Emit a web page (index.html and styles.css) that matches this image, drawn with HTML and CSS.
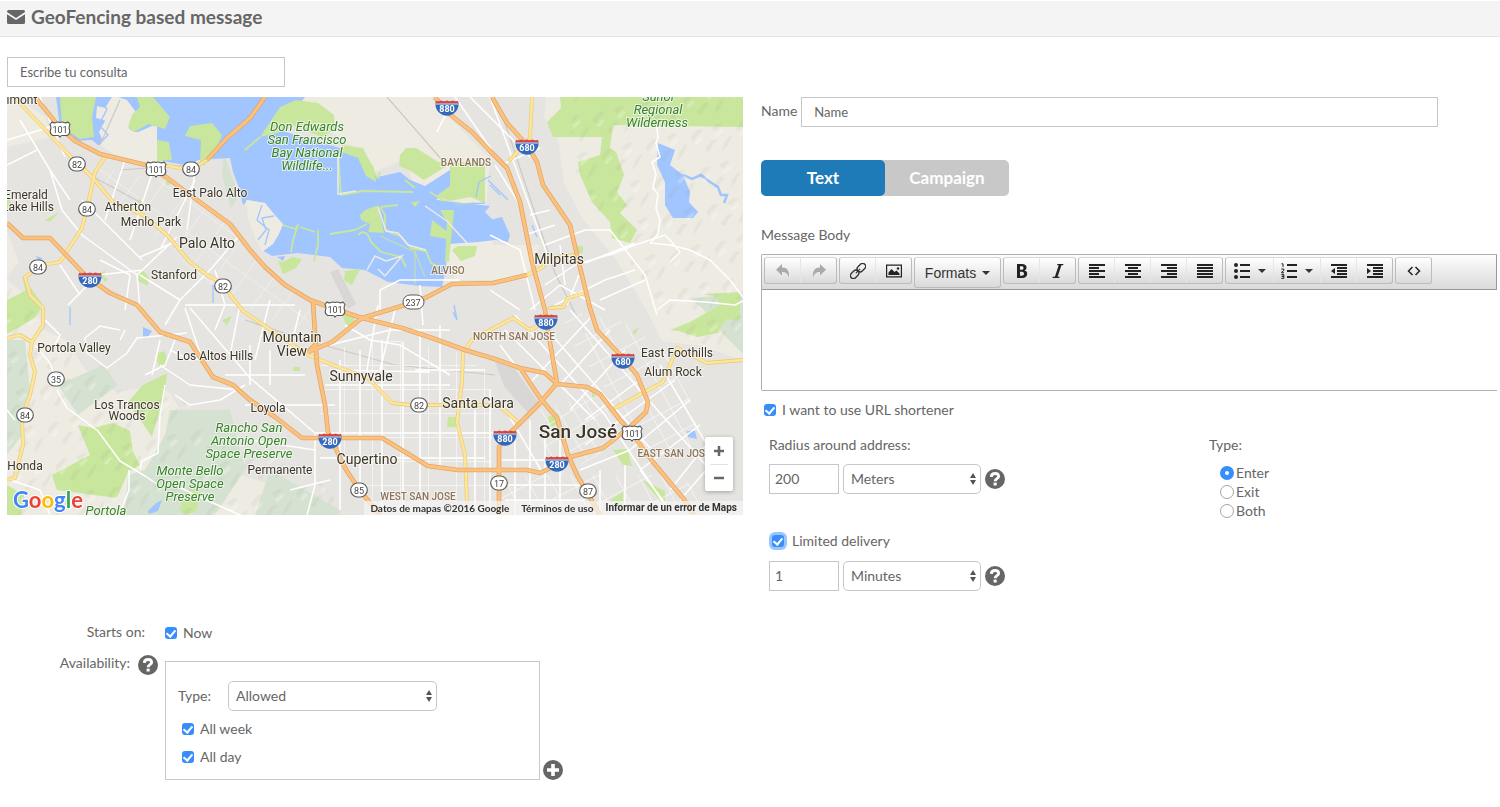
FILE: index.html
```html
<!DOCTYPE html>
<html lang="en">
<head>
<meta charset="utf-8">
<title>GeoFencing based message</title>
<link rel="stylesheet" href="styles.css">
</head>
<body>
<svg class="defs" aria-hidden="true">
  <symbol id="help" viewBox="0 0 20 20"><circle cx="10" cy="10" r="10" fill="#666"/><path d="M6.300 7.800C6.500 5.400 8 4.500 10 4.500c2.200 0 3.600 1.200 3.600 2.900 0 2.300-3.400 2.300-3.400 4.800" fill="none" stroke="#fff" stroke-width="2.900"/><rect x="8.600" y="13.600" width="3.100" height="2.900" fill="#fff"/></symbol>
  <symbol id="left" viewBox="0 0 16 16"><path d="M0 1h16v2H0zM0 4h10v2H0zM0 7h16v2H0zM0 10h10v2H0zM0 13h16v2H0z"/></symbol>
  <symbol id="center" viewBox="0 0 16 16"><path d="M0 1h16v2H0zM3 4h10v2H3zM0 7h16v2H0zM3 10h10v2H3zM0 13h16v2H0z"/></symbol>
  <symbol id="right" viewBox="0 0 16 16"><path d="M0 1h16v2H0zM6 4h10v2H6zM0 7h16v2H0zM6 10h10v2H6zM0 13h16v2H0z"/></symbol>
  <symbol id="justify" viewBox="0 0 16 16"><path d="M0 1h16v2H0zM0 4h16v2H0zM0 7h16v2H0zM0 10h16v2H0zM0 13h16v2H0z"/></symbol>
</svg>

<header class="page-head">
  <svg class="mail" viewBox="0 0 18 14"><path fill="#666" d="M1.500 0h15Q18 0 18 1.500v.6L9 8 0 2.100v-.6Q0 0 1.500 0zM0 4.200l9 5.900 9-5.900v8.300q0 1.500-1.500 1.500h-15Q0 14 0 12.500z"/></svg>
  <h1>GeoFencing based message</h1>
</header>

<main class="page">
  <input class="field search" type="text" placeholder="Escribe tu consulta" aria-label="Escribe tu consulta">

  <div class="columns">
    <section class="map" aria-label="Map">
      <svg class="map-art" viewBox="7 97 736 418" preserveAspectRatio="xMidYMid slice">
        <defs>
          <pattern id="hills" width="46" height="38" patternUnits="userSpaceOnUse" patternTransform="rotate(-12)">
            <path d="M3 12l8-6 6 1-7 5-6 5zM25 7l8-3 4 2-9 5zM14 27l9-8 6 1-6 4-5 6zM34 25l8-7 2 1-7 9-6 4z" fill="#8b8b75" opacity=".09"/>
            <path d="M5 19l7-5 3 1-7 6zM27 14l8-4 2 2-8 5z" fill="#fff" opacity=".25"/>
          </pattern>
          <pattern id="blocks" width="14" height="17" patternUnits="userSpaceOnUse" patternTransform="rotate(-31)"><path d="M0 0h14M0 0v17" stroke="#fff" stroke-width="1.400" fill="none"/></pattern>
          <pattern id="grid" width="28" height="24" patternUnits="userSpaceOnUse" patternTransform="translate(8 5)"><path d="M0 0h28M0 0v24" stroke="#fff" stroke-width="1.400" fill="none"/></pattern>
          <pattern id="diag" width="24" height="26" patternUnits="userSpaceOnUse" patternTransform="rotate(36)"><path d="M0 0h24M0 0v26" stroke="#fff" stroke-width="1.400" fill="none"/></pattern>
          <pattern id="east" width="20" height="25" patternUnits="userSpaceOnUse" patternTransform="rotate(-28)"><path d="M0 0h20M0 0v25" stroke="#fff" stroke-width="1.400" fill="none"/></pattern>
          <symbol id="inter" viewBox="0 0 24 16"><path d="M.5 3Q.2 8.500 3.500 12 7 15.600 12 15.700 17 15.600 20.500 12 23.800 8.500 23.500 3z" fill="#3369bd"/><path d="M1 .8Q4 2 6.500.6 9 2 12 .5 15 2 17.500.6 20 2 23 .8l.7 2.700H.3z" fill="#d64540"/><path d="M.6 4h22.800" stroke="#fff" stroke-width=".8"/></symbol>
          <symbol id="us" viewBox="0 0 22 17"><path d="M3 1Q5 2.500 7 1.500 9 .5 11 1.500 13 .5 15 1.500 17 2.500 19 1l2 2.500Q19.500 6 20.500 9q1 4-2.500 5.500H13Q12 14.500 11 16 10 14.500 9 14.500H4Q.5 13 1.500 9 2.500 6 1 3.500z" fill="#fff" stroke="#555" stroke-width="1.100"/></symbol>
          <symbol id="ca" viewBox="0 0 18 16"><rect x=".7" y="1" width="16.600" height="14" rx="7" fill="#fff" stroke="#5c5c5c" stroke-width="1.200"/></symbol>
          <path id="el-camino" d="M17 100L72 158 93 178 113 202 143 215 167 235 190 262 207 275 220 282 243 311 278 335 308 355 338 367 368 378 392 403 410 405H495"/>
          <path id="route-84" d="M105 157L95 172 90 195 82 228 60 262 43 265 25 277 30 295 43 308 43 325 32 342 30 355 35 372 30 395 22 418 23 445 15 478 7 480M7 338L20 335 32 342M153 163L190 170 207 160"/>
          <path id="expressways" d="M532 97L530 138 510 160M490 330L472 340 463 353 462 382 457 422 465 455 467 502M490 330L513 318 530 330 545 322M550 308L563 307 568 298 585 293M527 275L543 267 547 258 575 255M615 408L663 382 677 348 697 358 707 363 743 360M498 405L510 415 518 422"/>
          <path id="us-101" d="M35 97L48 113 60 128 75 141 100 154 146 165 166 177 193 197 230 224 250 250 265 267 285 285 310 300 332 308 362 318 402 328 432 338 465 350 495 359 520 368 545 373 557 384 587 387 600 394 620 420 633 435 653 462 683 498 694 515"/>
          <path id="i-880" d="M435 97L447 112 472 132 490 151 507 168 520 202 532 262 545 310 547 325 557 383 540 403 515 428 505 437 499 447V515"/>
          <path id="i-280" d="M492 97L507 123 527 145 537 162 543 185 570 225 577 255 590 308 597 330 623 358 637 375 648 402 646 412 630 427 603 448 570 457 557 465 540 473 527 470 458 470 428 466 382 438 302 438 275 417 250 400 233 385 213 377 190 342 160 332 137 305 110 293 87 277 50 238 23 238 7 223"/>
          <path id="spurs" d="M313 302L317 365 325 405 328 432 345 468 358 488 380 515M308 352L332 342 362 318 405 305 425 298 452 284 493 283 527 275M520 368L540 398 557 418 568 455 577 475 600 515M207 160L227 138 250 118 265 97M308 352L315 345"/>
        </defs>

        <rect x="7" y="97" width="736" height="418" fill="#e6e4e1"/>

        <!-- open land -->
        <g fill="#eeebe3">
          <path d="M546 97h197v263l-43-14-38-5-15-30-30-50-35-43-18-35-6-45-14-20z"/>
          <path d="M7 280l25 20 12 30 22 10 20 30 30 22 43-6 10 6 25 40 28 28 22 16 45 15 22 22 20 22H7z"/>
          <path d="M290 97h140l60 62-5 60 10 30-20 20-30 0-40-110-35 15-12-24-30-20-38-18z"/>
          <path d="M88 97h42l30 25v45l-42-10-30-20zM7 97h10l28 20 8 20-46 10zM7 232l12 30-12 14z"/>
          <path d="M448 245h92l-15 35h-70z"/>
        </g>
        <path d="M7 340l18 0 5 50-8 45-15 20zM58 385l45-20 15 20-40 30zM145 470l20-35 5-25 60 0 15 60-30 45h-90l3-40zM270 470l70 40v5h-85zM690 298l53-4v60l-20-20-20-25zM224 155l15 40-8 14-9-34z" fill="#d5e2d1"/>

        <!-- parks -->
        <path fill="#c8e69c" d="M560 97h183v30l-130-2-3 23 6 4 8 23-7 17 10 13-7 8 17 17-7 13-18-5-2-16-18-20-12-27-2-13 22-7 2-18h-49l-6-15 14-14zM143 385l24-12-2 19-13 45-24-35zM78 425l15 3 20-5 17 8 3 21 7 13-12 7-11 26-30-4-30-4-5-15 38-20zM7 300l24-12 12 17-8 13-28 16zM22 276l16 25-9 5zM100 275l8 4-3 3zM140 268l9 9-1 9-10-5zM158 353l6-2 4 9-7 9-4-8zM7 485l17 10-3 20H7zM97 276l8-6v6zM137 202l4-4v7zM222 320l10-4-5 9zM294 367h6v4h-7zM165 180l7 3-5 3zM45 220l14-8-9 10zM7 195l5 10-5 6zM187 492l12-5-2 23-10 5-8-5zM448 417h8v10h-9zM613 450l14-1 5 17-9-1zM642 480l23 11v15zM577 246h6v7h-6zM548 417l10-4 3 10-11 4zM670 330l20-8 30-17-3-8-14-3 37-2v28l-14-1-8 14-21 4-18-6zM632 332l7-5-4 8zM592 392l4 3-4 4zM343 316l9-4 4 12-9 4zM610 500l13-8v16z"/>

        <!-- bay -->
        <g fill="#a0c5ff">
          <path d="M118 97H305L288 118 280 130 305 138 340 148 362 152 370 172 378 177 400 172 410 180 425 186 450 170V190L436 200 490 206 485 212 495 222V240L478 242 448 244 446 268 442 287 420 286 388 282 365 270 342 268 330 257 298 253 272 256 262 250 273 242 283 225 265 203 248 200 243 205 238 185 233 172 230 158 198 160 190 166 157 160V125L145 132 128 132 130 125 138 115 127 100z"/>
          <path d="M56 97H112L105 108 97 106 96 118 110 122 108 128 100 126 107 138 98 145 92 140 76 141 60 128zM180 139l22 0 0 19-12 5-17-1-9-4z"/>
          <path d="M658 143l17 7-5 15 13 10 7 17-1 10 9 10-5 6-20 0-8-13 0-23-8-17z"/>
          <path d="M490 220l12-3 8 18-2 7-18-3zM36 256l6 2-2 6zM143 327l9 4-5 7-4-1zM148 511l8-8 6-3-4 11-9 3zM687 431l8 0 2 8-9-2zM277 257l8-1-2 5z"/>
        </g>
        <path d="M683 175l9 4 9-4 9 7 8 5 3 8 6 0-3 8" fill="none" stroke="#a0c5ff" stroke-width="2.500"/>
        <path fill="#eeebe3" d="M108 106l10-5 8 7-4 16 14 9 18-8 3 33-20-1-32-11-6-14 7-13z"/>
        <path fill="#eeebe3" d="M246 200l19 3 8 10 10 11-4 10-6 10-11 8-6-12-8-22z"/>
        <g fill="#c8e69c">
          <path d="M60 97h36l-4 20 2 20-14 2-18-12zM137 97h16l17 20-5 12-16-5-15 8-6-5 4-12 8-8zM157 140l12 2 3 18-15 1zM190 126l22-3 10 12-10 24-12 4 1-23-16-4z"/>
          <path d="M260 137l20-30 16-7 22 3 16 12 1 14-13 8-30-12-14 8zM342 145l20 3 12 20 2 14-10-6-8-18-16-6zM400 155l6-7 10 0 22 14 47 1v40l-15-6-20 4-14-5 14-10 0-22-26 16-15-10-10-4z"/>
          <path d="M360 215l5-5 13-5 6 28-16-1 2-8-9-4zM432 220l16 12-1 7-17-3zM440 210l14 0-5 52-4 0 2-40zM452 250l6-4 19 0-2 10-14 5zM411 202l9-1-5 6zM278 261l5 1 9-5 10 2-6 9-13 6zM345 271l15-2-8 16-8-5z"/>
        </g>
        <g fill="none" stroke="#c8e69c" stroke-width="1.800" stroke-linejoin="round">
          <path d="M338 153l3 42 22-4 50 1M380 207l5 8 0 14 8 5 8 2 10 12 15 3 5 12 10 5M358 235q8-8 13 7l10 10 20 5 5 10M283 225l12 4 3-4-5 15-2 12M318 230v15l-4 16M300 227l15 5M330 234l25-4 12-6M245 150l15-13M362 148l12 25 4 5 2-6M430 192l14 9 15-7M405 180l10 8M380 207l18-2M455 205l20-2"/>
          <path d="M415 247v37M380 236l35 16 10 25" stroke-width="1"/>
        </g>
        <path d="M367 270l8-14 11 5 16-5-17 20-7-7M338 156v38l18-3M378 207l8 24 12 2 10 12 18 5M425 206l22 15 20 22" fill="none" stroke="#eeebe3" stroke-width="1.500"/>
        <g fill="none" stroke="#a0c5ff" stroke-width="1.300"><path d="M97 97l10 12-8 16 9 10-10 10M258 240l8-10-4-12 12-2M262 205l-5 15 12 10-4 15M488 180l20 20M457 320l-3-15M476 197l3-15 12-6M490 185l10 10M213 303v-18M70 325v-18M532 225l5 12M457 320l-4-8M420 197l35 8 30-2"/></g>
        <path d="M7 97h736v418H7z" fill="url(#hills)" clip-path="url(#slopes)"/>
        <clipPath id="slopes"><path d="M575 97h168v260l-60-20-65-90-50-90zM7 270l50 70 60 50 55-5 40 50 90 30 50 50H7z"/></clipPath>

        <!-- airfields and rail -->
        <path d="M330 272l8-3 18 35-8 5zM495 362l18 4 28 40-12 8-25-28z" fill="#d9d7d5"/>
        <path d="M387 97l55 63M505 123l50 150 30 60M90 175l55 30M120 170l85-6M100 145l20-45M245 320l60 20 90 25 100 10" fill="none" stroke="#ccc9c6" stroke-width="1.200"/>

        <!-- street grids -->
        <g opacity=".75">
          <path d="M322 350l70-10 60 10 40 25v140H385l-45-50-20-50z" fill="url(#grid)"/>
          <path d="M540 410l50-15 30 20 0 25-30 20-30 15-20-40z" fill="url(#blocks)"/>
          <path d="M560 310l60 10 60 40 20 80-40 30-40-60-50-70z" fill="url(#east)"/>
          <path d="M500 475h180l40 40H500z" fill="url(#east)"/>
          <path d="M90 165l100 20 120 125-5 30-90-50-80-70z" fill="url(#diag)" opacity=".6"/>
        </g>

        <g fill="none" stroke="#fff" stroke-width="1.500" stroke-linejoin="round">
          <path d="M7 140l50-15M20 120l30 50 20 30M40 97l25 60M7 165l30-15M50 170l12 40 20 25 55 40 40-38M82 200l60 60M105 220l20-60M130 240l25-75M160 250l35-70M195 170l-8 60M100 260l30 15-5 35M60 265l20 30M68 305l30-30 45-5M137 275l3 35M140 275l40 25 30-30 30-35M180 300l-15 25M190 262l-15-20-35 15M215 270l10 35-10 25M185 305l110 0M185 308l20 60M190 308l60 70 65 55M120 330l-20-4-15 12 2 15 20 15 20-15 10-15 50-5M175 340l-10 25-20 10M300 310l-10 40M270 300l-15 60M240 305l-10 50M225 375h80M250 345v40M270 350v35M245 405h90M315 433h180M320 458h165M325 385h125M340 360v150M360 350v140M382 340v170M403 342v170M420 330v180M440 325v140M475 410v100M490 390v120M330 345l60-15 60 0M330 370l100 2M345 325l25 15 30 5 50 30M378 305l-12 70M395 310l-15 60M420 285l3 40M380 310v-20l20-10h60M415 370h70"/>
          <path d="M490 97l20 55 40 110M470 97l60 60M455 97l45 65M447 112l-10 20M495 165l25 40M505 163l35-15M490 235l30 15 15 60M530 215l20-5M525 235l30-10M545 245l40-15 25 0 35 45 12 40M545 285l30-20 40-12M555 305l50-25 30-10M560 245l5 40M530 310l30-25 45 25M490 290l30 20M585 263l50-20M600 300l45-20M610 255l25-10 30-10 5 5 10 12-10 10M650 243l20 2 20 5 20 10 20 20 15 20-10 5-30-3-35-2-13 10M567 305l12-30"/>
          <path d="M500 345l45 60M505 330l90 90M515 315l90 100 60 90M550 333l100 115M570 310l140 160M590 318l-60 65M610 330l-50 55M625 350l-55 60M640 380l-55 40M675 380l-90 65M690 400l-60 50M700 425l-60 45M710 440l-40 50M715 460l-35 40M660 365l50 85M500 460h70M500 485h80M505 500h80M515 435v80M530 420v90M545 435v75M560 440v70M600 470v40M625 465v50M640 470l30 40M580 470l50-20M507 412l35 60"/>
          <path d="M656 120l2 17-2 6 4 14-8 5 4 12-3 14 5 6-2 14 4 12-2 14-8 9M57 390l10 18 31 23 22 30 25 15 12 8M120 340l5-10M45 320l15 15-5 10M35 345l15 18 7 20M160 340l-8 35M165 385l-5 30-2 38-16 8-2 8M175 395l15 10 30-5 25-15M170 350l20 10 25-3M160 365l30 20 50 5M129 470l0 20-10 25M175 485l20 10 45 20M250 440l65 10v35l-8 30M290 490l40-10M7 410l8 10M10 480l30 10 10 25M315 434v50"/>
        </g>

        <!-- arterials -->
        <g fill="none" stroke-linejoin="round" stroke-linecap="round">
          <g stroke="#e5c978" stroke-width="3.800"><use href="#el-camino"/><use href="#route-84"/><use href="#expressways"/></g>
          <g stroke="#fde59a" stroke-width="2.600"><use href="#el-camino"/><use href="#route-84"/><use href="#expressways"/></g>
        </g>

        <!-- freeways: casing below, fill above -->
        <g fill="none" stroke-linejoin="round">
          <g stroke="#e5a563" stroke-width="4.600"><use href="#us-101"/><use href="#i-880"/><use href="#i-280"/><use href="#spurs"/></g>
          <g stroke="#fbc27f" stroke-width="3"><use href="#us-101"/><use href="#i-880"/><use href="#i-280"/><use href="#spurs"/></g>
        </g>

        <!-- route shields -->
        <g class="shield">
          <use href="#us" x="49" y="121" width="22" height="17"/><text x="60" y="133">101</text>
          <use href="#us" x="145" y="161" width="22" height="17"/><text x="156" y="173">101</text>
          <use href="#us" x="324" y="301" width="22" height="17"/><text x="335" y="313">101</text>
          <use href="#us" x="621" y="425" width="22" height="17"/><text x="632" y="437">101</text>
          <use href="#ca" x="68" y="156" width="18" height="16"/><text x="77" y="168">82</text>
          <use href="#ca" x="182" y="161" width="18" height="16"/><text x="191" y="173">84</text>
          <use href="#ca" x="78" y="201" width="18" height="16"/><text x="87" y="213">84</text>
          <use href="#ca" x="29" y="259" width="18" height="16"/><text x="38" y="271">84</text>
          <use href="#ca" x="214" y="278" width="18" height="16"/><text x="223" y="290">82</text>
          <use href="#ca" x="47" y="371" width="18" height="16"/><text x="56" y="383">35</text>
          <use href="#ca" x="16" y="407" width="18" height="16"/><text x="25" y="419">84</text>
          <use href="#ca" x="410" y="397" width="18" height="16"/><text x="419" y="409">82</text>
          <use href="#ca" x="350" y="482" width="18" height="16"/><text x="359" y="494">85</text>
          <use href="#ca" x="490" y="475" width="18" height="16"/><text x="499" y="487">17</text>
          <use href="#ca" x="579" y="483" width="18" height="16"/><text x="588" y="495">87</text>
          <rect x="403" y="295" width="21" height="14" rx="7" fill="#fff" stroke="#5c5c5c"/><text x="413" y="306">237</text>
        </g>
        <g class="shield inter">
          <use href="#inter" x="78" y="272" width="24" height="16"/><text x="90" y="284">280</text>
          <use href="#inter" x="435" y="100" width="24" height="16"/><text x="447" y="112">880</text>
          <use href="#inter" x="515" y="139" width="24" height="16"/><text x="527" y="151">680</text>
          <use href="#inter" x="534" y="314" width="24" height="16"/><text x="546" y="326">880</text>
          <use href="#inter" x="611" y="353" width="24" height="16"/><text x="623" y="365">680</text>
          <use href="#inter" x="318" y="433" width="24" height="16"/><text x="330" y="445">280</text>
          <use href="#inter" x="493" y="430" width="24" height="16"/><text x="505" y="442">880</text>
          <use href="#inter" x="545" y="456" width="24" height="16"/><text x="557" y="468">280</text>
        </g>

        <!-- place names -->
        <g class="place">
          <text x="22" y="104">imont</text>
          <text x="26" y="199">Emerald</text><text x="28" y="211">Lake Hills</text>
          <text x="128" y="211">Atherton</text><text x="151" y="226">Menlo Park</text>
          <text x="210" y="197">East Palo Alto</text><text x="174" y="279">Stanford</text>
          <text x="74" y="352">Portola Valley</text><text x="215" y="360">Los Altos Hills</text>
          <text x="127" y="409">Los Trancos</text><text x="127" y="420">Woods</text>
          <text x="25" y="470">Honda</text><text x="268" y="412">Loyola</text>
          <text x="280" y="474">Permanente</text>
          <text x="677" y="357">East Foothills</text><text x="673" y="376">Alum Rock</text>
        </g>
        <g class="place town">
          <text x="207" y="248">Palo Alto</text><text x="559" y="264">Milpitas</text>
          <text x="292" y="342">Mountain</text><text x="292" y="356">View</text>
          <text x="361" y="381">Sunnyvale</text><text x="478" y="408">Santa Clara</text>
          <text x="367" y="464">Cupertino</text>
        </g>
        <text class="place city" x="578" y="438">San José</text>
        <g class="place district">
          <text x="466" y="166">BAYLANDS</text><text x="448" y="274">ALVISO</text>
          <text x="514" y="340">NORTH SAN JOSE</text><text x="418" y="500">WEST SAN JOSE</text>
          <text x="674" y="457">EAST SAN JOSE</text>
        </g>
        <g class="place park">
          <text x="307" y="131">Don Edwards</text><text x="307" y="144">San Francisco</text><text x="307" y="157">Bay National</text><text x="307" y="170">Wildlife...</text>
          <text x="658" y="101">Sunol</text><text x="658" y="114">Regional</text><text x="657" y="127">Wilderness</text>
          <text x="249" y="432">Rancho San</text><text x="249" y="445">Antonio Open</text><text x="249" y="458">Space Preserve</text>
          <text x="190" y="475">Monte Bello</text><text x="190" y="488">Open Space</text><text x="190" y="501">Preserve</text>
          <text x="106" y="515">Portola</text>
        </g>
        <text class="google" x="13" y="508"><tspan fill="#4285f4">G</tspan><tspan fill="#ea4335">o</tspan><tspan fill="#fbbc05">o</tspan><tspan fill="#4285f4">g</tspan><tspan fill="#34a853">l</tspan><tspan fill="#ea4335">e</tspan></text>
      </svg>
      <div class="zoom">
        <button type="button" aria-label="Zoom in"><svg viewBox="0 0 12 12"><path d="M1 6h10M6 1v10"/></svg></button>
        <button type="button" aria-label="Zoom out"><svg viewBox="0 0 12 12"><path d="M1 6h10"/></svg></button>
      </div>
      <div class="credits">
        <span>Datos de mapas ©2016 Google</span>
        <a href="#terms">Términos de uso</a>
        <a href="#report" class="report">Informar de un error de Maps</a>
      </div>
    </section>

    <form class="message">
      <div class="name-row">
        <label for="name">Name</label>
        <input class="field" id="name" type="text" placeholder="Name">
      </div>

      <div class="tabs">
        <button type="button" class="tab active">Text</button>
        <button type="button" class="tab">Campaign</button>
      </div>

      <label class="body-label" for="body">Message Body</label>
      <div class="editor">
        <div class="toolbar">
          <div class="group faded">
            <button type="button" aria-label="Undo"><svg viewBox="0 0 16 16"><path d="M7 1v3.500c5 0 7.500 3 7 10C12.500 10.500 11 9 7 9v3.500L1 6.700z"/></svg></button>
            <button type="button" aria-label="Redo"><svg viewBox="0 0 16 16"><path d="M9 1v3.500c-5 0-7.500 3-7 10C3.500 10.500 5 9 9 9v3.500l6-5.800z"/></svg></button>
          </div>
          <div class="group">
            <button type="button" aria-label="Link"><svg viewBox="0 0 16 16"><g fill="none" stroke="#333" stroke-width="1.300" transform="rotate(-45 8 8)"><rect x="-1.500" y="5" width="9.500" height="6" rx="3"/><rect x="8" y="5" width="9.500" height="6" rx="3"/><path d="M5 8h6"/></g></svg></button>
            <button type="button" aria-label="Image"><svg viewBox="0 0 16 16"><path d="M0 1.500h16v13H0zM1.200 2.700v10.600h13.600V2.700z" fill-rule="evenodd"/><path d="M2.500 12V9.500L5.500 6l3 3 2-1.500 3 3V12z"/><circle cx="12" cy="5.500" r="1.200"/></svg></button>
          </div>
          <div class="group formats"><button type="button">Formats <i class="caret"></i></button></div>
          <div class="group">
            <button type="button" aria-label="Bold"><svg viewBox="0 0 16 16"><path fill-rule="evenodd" d="M3 1h5c3 0 4.500 1.300 4.500 3.500 0 1.600-.8 2.500-2 3 1.700.4 2.700 1.500 2.700 3.300 0 2.700-1.800 4.200-5 4.200H3zM6 3.200v3.500h1.600c1.300 0 1.900-.6 1.900-1.800s-.6-1.700-1.900-1.700zM6 8.800v4h1.800c1.500 0 2.200-.7 2.200-2s-.7-2-2.200-2z"/></svg></button>
            <button type="button" aria-label="Italic"><svg viewBox="0 0 16 16"><path d="M7.500 1h6l-.4 1.200h-1.700L7.600 13.800h2L9.200 15H2.500l.4-1.200h2L8.700 2.200H7.100z"/></svg></button>
          </div>
          <div class="group">
            <button type="button" aria-label="Align left"><svg><use href="#left"/></svg></button>
            <button type="button" aria-label="Align center"><svg><use href="#center"/></svg></button>
            <button type="button" aria-label="Align right"><svg><use href="#right"/></svg></button>
            <button type="button" aria-label="Justify"><svg><use href="#justify"/></svg></button>
          </div>
          <div class="group">
            <button type="button" class="wide" aria-label="Bullet list"><svg viewBox="0 0 16 16"><path d="M6 1h10v2H6zM6 7h10v2H6zM6 13h10v2H6z"/><circle cx="2" cy="2" r="2"/><circle cx="2" cy="8" r="2"/><circle cx="2" cy="14" r="2"/></svg><i class="caret"></i></button>
            <button type="button" class="wide" aria-label="Numbered list"><svg viewBox="0 0 16 16"><path d="M6 1h10v2H6zM6 7h10v2H6zM6 13h10v2H6z"/><path d="M.5.800H2V4M.3 6h2.500v1.500L.7 9v.8H3M.3 11.600h2.500v1.800H.8h2v2H.3" fill="none" stroke="#222" stroke-width="1"/></svg><i class="caret"></i></button>
            <button type="button" aria-label="Outdent"><svg viewBox="0 0 16 16"><path d="M0 1h16v2H0zM6 4h10v2H6zM6 7h10v2H6zM6 10h10v2H6zM0 13h16v2H0zM4 5v6L0 8z"/></svg></button>
            <button type="button" aria-label="Indent"><svg viewBox="0 0 16 16"><path d="M0 1h16v2H0zM6 4h10v2H6zM6 7h10v2H6zM6 10h10v2H6zM0 13h16v2H0zM0 5v6l4-3z"/></svg></button>
          </div>
          <div class="group"><button type="button" aria-label="Source code"><svg viewBox="0 0 16 16"><path d="M6.500 4L2.500 8l4 4M9.500 4l4 4-4 4" fill="none" stroke="#222" stroke-width="1.500"/></svg></button></div>
        </div>
        <textarea id="body"></textarea>
      </div>

      <label class="check shorten"><input type="checkbox" checked>I want to use URL shortener</label>

      <div class="options">
        <div class="limits">
          <label for="radius">Radius around address:</label>
          <div class="pair">
            <input class="field" id="radius" type="text" value="200">
            <select aria-label="Radius unit"><option>Meters</option></select>
            <svg class="badge"><use href="#help"/></svg>
          </div>
          <label class="check limited"><input class="focus" type="checkbox" checked>Limited delivery</label>
          <div class="pair">
            <input class="field" type="text" value="1" aria-label="Delivery limit">
            <select aria-label="Delivery unit"><option>Minutes</option></select>
            <svg class="badge"><use href="#help"/></svg>
          </div>
        </div>
        <fieldset class="types">
          <legend>Type:</legend>
          <label><input type="radio" name="type" checked>Enter</label>
          <label><input type="radio" name="type">Exit</label>
          <label><input type="radio" name="type">Both</label>
        </fieldset>
      </div>
    </form>
  </div>

  <form class="schedule">
    <span class="caption start">Starts on:</span>
    <label class="check"><input type="checkbox" checked>Now</label>
    <span class="caption">Availability: <svg class="badge"><use href="#help"/></svg></span>
    <div class="availability">
      <div class="rule">
        <div class="rule-type">
          <label for="allow">Type:</label>
          <select id="allow"><option>Allowed</option></select>
        </div>
        <label class="check"><input type="checkbox" checked>All week</label>
        <label class="check"><input type="checkbox" checked>All day</label>
      </div>
      <button type="button" class="add" aria-label="Add"><svg class="badge" viewBox="0 0 20 20"><circle cx="10" cy="10" r="10" fill="#666"/><path d="M10 4v12M4 10h12" stroke="#fff" stroke-width="3.600"/></svg></button>
    </div>
  </form>
</main>
</body>
</html>
```
FILE: styles.css
```css
* { box-sizing: border-box; }
body {
  margin: 0;
  background: #fff;
  color: #666;
  font: 14px/20px Lato, "Open Sans", sans-serif;
}
button, input, select, textarea { font: inherit; color: inherit; margin: 0; }
button { padding: 0; border: 0; background: none; }
.defs { display: none; }

.page-head {
  display: flex;
  align-items: center;
  gap: 6px;
  height: 37px;
  padding: 0 7px 4px;
  background: #f4f4f4;
  border-top: 1px solid #fff;
  border-bottom: 1px solid #e4e4e4;
}
.mail { width: 18px; height: 14px; }
h1 { margin: 0; font-size: 19px; line-height: 24px; font-weight: 700; }

.page { padding: 20px 3px 20px 7px; }
.field {
  height: 30px;
  padding: 0 12px;
  border: 1px solid #c6c6c6;
  border-radius: 0;
  background: #fff;
  font-size: 13px;
}
.field::placeholder { color: #666; opacity: 1; }
.search { display: block; width: 278px; margin-bottom: 10px; }
.columns { display: grid; grid-template-columns: 1fr 1fr; gap: 18px; }

/* map */
.map { position: relative; height: 418px; overflow: hidden; }
.map-art { display: block; width: 100%; height: 100%; }
.place {
  font: 12px Roboto, sans-serif;
  text-anchor: middle;
  fill: #3c3529;
  stroke: #f7f6f3;
  stroke-width: 2px;
  stroke-opacity: 0.8;
  paint-order: stroke;
}
.town { font-size: 14px; }
.city { font-size: 19px; font-weight: 500; }
.district { font-size: 10px; font-weight: 500; fill: #8a7358; }
.park { font-size: 13px; font-style: italic; fill: #35852a; }
.shield { font: 9px Roboto, sans-serif; text-anchor: middle; fill: #444; }
.inter { font-weight: 700; fill: #fff; }
.google { font: 700 22px Lato, sans-serif; stroke: #fff; stroke-width: 2px; paint-order: stroke; }
.zoom {
  position: absolute;
  right: 10px;
  bottom: 24px;
  width: 28px;
  padding: 0 5px;
  background: #fff;
  border-radius: 2px;
  box-shadow: 0 1px 4px rgba(0, 0, 0, 0.3);
}
.zoom button { display: grid; place-items: center; width: 18px; height: 27px; }
.zoom button + button { border-top: 1px solid #e2e2e2; }
.zoom svg { width: 12px; height: 12px; stroke: #666; stroke-width: 2.500; }
.credits {
  position: absolute;
  right: 0;
  bottom: 0;
  display: flex;
  align-items: center;
  gap: 12px;
  padding: 0 6px;
  background: rgba(245, 245, 245, 0.7);
  color: #333;
  font-size: 10px;
  line-height: 14px;
  font-weight: 700;
}
.credits a { color: inherit; text-decoration: none; }
.report { font-family: Roboto, sans-serif; }

/* message form */
.name-row { display: flex; align-items: center; gap: 4px; padding-right: 59px; }
.name-row label { padding-bottom: 3px; }
.name-row .field { flex: 1; }
.tabs {
  display: inline-flex;
  margin: 33px 0 29px;
  border-radius: 5px;
  background: #c8c8c8;
  vertical-align: top;
}
.tab {
  width: 124px;
  height: 36px;
  border-radius: 5px;
  color: #fff;
  font-size: 17px;
  font-weight: 700;
}
.tab.active { background: #1f7ab8; }
.body-label { display: block; margin-bottom: 9px; }
.editor {
  border: 1px solid #b0b0b0;
  border-right: 0;
  border-radius: 2px 0 0 2px;
}
.toolbar {
  display: flex;
  align-items: flex-start;
  gap: 2px;
  height: 35px;
  padding: 2px;
  background: linear-gradient(#fdfdfd, #dadada);
  border-bottom: 1px solid #999;
  border-right: 1px solid #999;
}
.group {
  display: flex;
  height: 27px;
  border: 1px solid #bcbcbc;
  border-top-color: #d8d8d8;
  border-radius: 3px;
  background: linear-gradient(#fff, #dadada);
  fill: #222;
}
.group button { display: grid; place-items: center; width: 35px; }
.group button + button { width: 36px; border-left: 1px solid #e6e6e6; }
.group .wide, .group .wide + .wide { display: flex; align-items: center; justify-content: center; gap: 8px; width: 47px; }
.group svg { width: 16px; height: 16px; }
.faded { fill: #aaa; }
.formats { height: 31px; }
.formats button {
  display: flex;
  align-items: center;
  justify-content: center;
  gap: 6px;
  width: 85px;
  color: #333;
  font: 14px "Liberation Sans", sans-serif;
}
.caret { border: 4px solid transparent; border-top-color: #333; border-bottom: 0; }
.editor textarea {
  display: block;
  width: 100%;
  height: 100px;
  border: 0;
  padding: 8px;
  background: #fff;
  resize: none;
}

.check { display: flex; align-items: center; gap: 6px; }
[type="checkbox"] {
  appearance: none;
  display: grid;
  place-items: center;
  width: 12px;
  height: 12px;
  border-radius: 3px;
  background: #378dfb;
}
[type="checkbox"]::after {
  content: "";
  width: 4px;
  height: 7px;
  margin-bottom: 2px;
  border: solid #fff;
  border-width: 0 2px 2px 0;
  transform: rotate(40deg);
}
.focus { box-shadow: 0 0 0 3px #98c5fb; }
.shorten { margin: 9px 0 15px 3px; }
.options { display: grid; grid-template-columns: 440px 1fr; padding-left: 8px; }
.limits > label { display: block; }
.pair { display: flex; align-items: center; gap: 4px; margin-top: 9px; }
.pair .field { width: 70px; padding: 0 5px 2px; font-size: 14px; }
.pair select { width: 138px; }
.limits > .limited { display: flex; gap: 8px; margin: 37px 0 0 3px; }
.limited + .pair { margin-top: 10px; }
select {
  appearance: none;
  height: 30px;
  padding: 0 7px;
  border: 1px solid #c6c6c6;
  border-radius: 5px;
  background: #fff url("data:image/svg+xml,%3Csvg xmlns='http://www.w3.org/2000/svg' width='6' height='12'%3E%3Cpath d='M3 0l3 5H0zM3 12l3-5H0z' fill='%23555'/%3E%3C/svg%3E") no-repeat right 4px center;
}
.badge { display: block; flex: none; width: 20px; height: 20px; }
.types { display: grid; align-content: start; margin: 0; padding: 0; border: 0; }
.types legend { margin-bottom: 8px; padding: 0; }
.types label { display: flex; align-items: center; gap: 2px; height: 19px; padding-left: 11px; }
[type="radio"] {
  appearance: none;
  width: 14px;
  height: 14px;
  border: 1px solid #a5a5a5;
  border-radius: 50%;
  background: #fff;
}
[type="radio"]:checked { border: 5px solid #378dfb; }

/* schedule */
.schedule {
  display: grid;
  grid-template-columns: 151px 1fr;
  gap: 10px 7px;
  margin-top: 31px;
}
.caption { display: flex; gap: 8px; justify-content: flex-end; align-self: start; }
.start { padding-right: 13px; }
.schedule > .check { padding-top: 1px; }
.availability { display: flex; align-items: flex-end; gap: 3px; padding-top: 8px; }
.caption .badge { margin-top: 2px; }
.rule { width: 375px; height: 119px; padding: 19px 12px; border: 1px solid #c8c8c8; }
.rule-type { display: flex; align-items: center; gap: 17px; margin-bottom: 8px; }
.rule-type select { width: 209px; }
.rule .check { padding-left: 4px; margin-bottom: 8px; }
```
